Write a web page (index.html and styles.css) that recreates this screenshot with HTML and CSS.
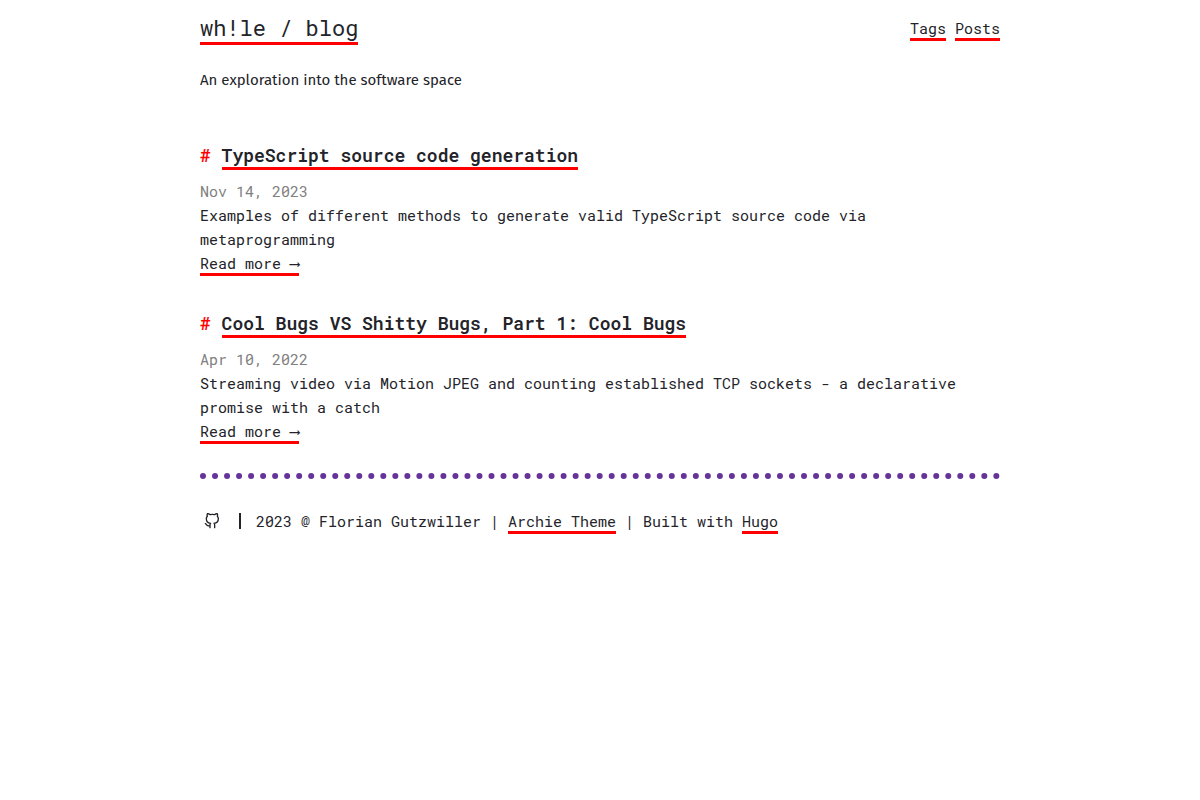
FILE: index.html
```html
<!DOCTYPE html>
<html lang="en">
<head>
  <meta charset="UTF-8">
  <meta name="viewport" content="width=device-width, initial-scale=1">
  <title>wh!le / blog</title>
  <link rel="stylesheet" href="styles.css">
</head>
<body>
  <div class="content">
    <header>
      <div class="main"><a href="/">wh!le / blog</a></div>
      <nav>
        <a href="/tags">Tags</a>
        <a href="/posts">Posts</a>
      </nav>
    </header>

    <main class="list">
      <div class="site-description">An exploration into the software space</div>

      <section class="list-item">
        <h1 class="title"><a href="/posts/typescript-source-code-generation/">TypeScript source code generation</a></h1>
        <time datetime="2023-11-14">Nov 14, 2023</time>
        <div class="description">Examples of different methods to generate valid TypeScript source code via metaprogramming</div>
        <a class="readmore" href="/posts/typescript-source-code-generation/">Read more ⟶</a>
      </section>

      <section class="list-item">
        <h1 class="title"><a href="/posts/cool-bugs/">Cool Bugs VS Shitty Bugs, Part 1: Cool Bugs</a></h1>
        <time datetime="2022-04-10">Apr 10, 2022</time>
        <div class="description">Streaming video via Motion JPEG and counting established TCP sockets - a declarative promise with a catch</div>
        <a class="readmore" href="/posts/cool-bugs/">Read more ⟶</a>
      </section>
    </main>

    <footer>
      <a class="soc" href="https://github.com/" aria-label="GitHub">
        <svg width="16" height="16" viewBox="0 0 24 24" fill="none" stroke="currentColor" stroke-width="2" stroke-linecap="round" stroke-linejoin="round">
          <path d="M9 19c-5 1.5-5-2.5-7-3m14 6v-3.87a3.37 3.37 0 0 0-.94-2.61c3.14-.35 6.44-1.54 6.44-7A5.44 5.44 0 0 0 20 4.77 5.07 5.07 0 0 0 19.91 1S18.73.65 16 2.48a13.38 13.38 0 0 0-7 0C6.27.65 5.09 1 5.09 1A5.07 5.07 0 0 0 5 4.77a5.44 5.44 0 0 0-1.5 3.78c0 5.42 3.3 6.61 6.44 7A3.37 3.37 0 0 0 9 18.13V22"/>
        </svg>
      </a>
      <span class="divider"></span>
      <div class="footer-info">2023 @ Florian Gutzwiller | <a href="https://github.com/athul/archie">Archie Theme</a> | Built with <a href="https://gohugo.io">Hugo</a></div>
    </footer>
  </div>
</body>
</html>
```

FILE: styles.css
```css
:root {
  --maincolor: #f00;
  --bordercl: rebeccapurple;
  --textcolor: #232329;
}
* { box-sizing: border-box; }
body {
  margin: 0;
  padding: 0 16px;
  font-family: "Roboto Mono", "DejaVu Sans Mono", monospace;
  font-size: 15px;
  line-height: 24px;
  color: var(--textcolor);
  background: #fff;
}
.content {
  max-width: 800px;
  margin: 0 auto;
}
a {
  color: inherit;
  text-decoration: none;
  border-bottom: 3px solid var(--maincolor);
}
header {
  display: flex;
  flex-wrap: wrap;
  align-items: center;
  justify-content: space-between;
  padding: 10px 0;
}
.main {
  font-size: 22px;
  line-height: 36px;
}
.site-description {
  margin: 12px 0 45px;
  font-family: "Fira Sans", "Noto Sans", sans-serif;
}
.list-item { margin-bottom: 30px; }
.title {
  margin: 0 0 6px;
  font-size: 18px;
  font-weight: 600;
  line-height: 36px;
}
.title::before {
  content: "# ";
  color: var(--maincolor);
}
time {
  display: block;
  color: #808080;
}
footer {
  display: flex;
  flex-wrap: wrap;
  align-items: center;
  padding: 30px 0;
  border-top: 6px dotted var(--bordercl);
}
.soc {
  display: flex;
  padding: 0 4px;
  border-bottom: none;
}
.divider {
  width: 2px;
  height: 16px;
  margin: 0 15px;
  background: var(--textcolor);
}
```
